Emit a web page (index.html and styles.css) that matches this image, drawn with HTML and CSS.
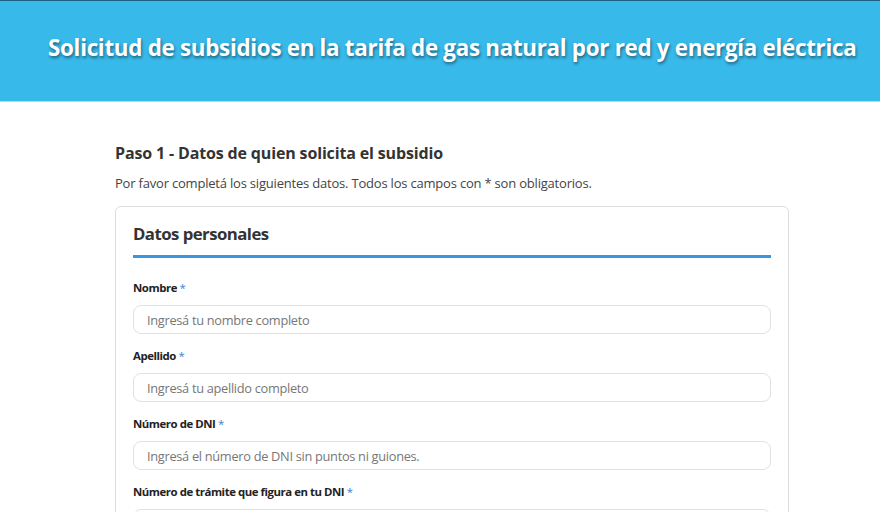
FILE: index.html
```html
<!DOCTYPE html>
<html lang="es">
<head>
<meta charset="utf-8">
<title>Solicitud de subsidios</title>
<link rel="stylesheet" href="styles.css">
</head>
<body>
<header class="banner">
  <h1 class="banner-title">Solicitud de subsidios en la tarifa de gas natural por red y energía eléctrica</h1>
</header>
<main class="page">
  <h2 class="step-title">Paso 1 - Datos de quien solicita el subsidio</h2>
  <p class="step-intro">Por favor completá los siguientes datos. Todos los campos con * son obligatorios.</p>
  <section class="card">
    <h3 class="card-title">Datos personales</h3>
    <div class="field">
      <label class="field-label" for="nombre">Nombre <span class="req">*</span></label>
      <input class="field-input" id="nombre" type="text" placeholder="Ingresá tu nombre completo">
    </div>
    <div class="field">
      <label class="field-label" for="apellido">Apellido <span class="req">*</span></label>
      <input class="field-input" id="apellido" type="text" placeholder="Ingresá tu apellido completo">
    </div>
    <div class="field">
      <label class="field-label" for="dni">Número de DNI <span class="req">*</span></label>
      <input class="field-input" id="dni" type="text" placeholder="Ingresá el número de DNI sin puntos ni guiones.">
    </div>
    <div class="field">
      <label class="field-label" for="tramite">Número de trámite que figura en tu DNI <span class="req">*</span></label>
      <input class="field-input" id="tramite" type="text" placeholder="">
    </div>
  </section>
</main>
</body>
</html>
```
FILE: styles.css
```css
* { box-sizing: border-box; }
body {
  margin: 0;
  font-family: "Open Sans", "Noto Sans", "Liberation Sans", sans-serif;
  color: #333;
  background: #fff;
}
.banner {
  height: 102px;
  background: #37b9ea;
  border-top: 1px solid #1d5f86;
  border-bottom: 1px solid #a9def3;
  display: flex;
  align-items: center;
  padding: 0 0 8px 48px;
  overflow: hidden;
}
.banner-title {
  margin: 0;
  font-size: 22.4px;
  letter-spacing: -0.3px;
  font-weight: 700;
  color: #fff;
  white-space: nowrap;
  text-shadow: 1px 2px 3px rgba(0, 0, 0, 0.45);
}
.page {
  margin-left: 115px;
  width: 674px;
}
.step-title {
  margin: 40px 0 0;
  font-size: 16px;
  letter-spacing: -0.15px;
  line-height: 22px;
  font-weight: 700;
  color: #333;
}
.step-intro {
  margin: 9px 0 0;
  font-size: 13px;
  letter-spacing: -0.2px;
  line-height: 20px;
  color: #444;
}
.card {
  margin-top: 13px;
  border: 1px solid #dcdcdc;
  border-radius: 6px;
  padding: 15px 17px 20px;
}
.card-title {
  margin: 0;
  font-size: 16.8px;
  letter-spacing: -0.55px;
  line-height: 24px;
  font-weight: 700;
  color: #333;
  padding-bottom: 9px;
  border-bottom: 3px solid #3a95e2;
  margin-bottom: 22px;
}
.field {
  display: flex;
  flex-direction: column;
  gap: 9px;
  margin-bottom: 14px;
}
.field-label {
  font-size: 11.4px;
  letter-spacing: -0.45px;
  line-height: 16px;
  font-weight: 700;
  color: #222;
}
.req {
  color: #3c7fd0;
  font-weight: 400;
}
.field-input {
  height: 29px;
  width: 100%;
  border: 1px solid #e1e1e1;
  border-radius: 8px;
  padding: 0 13px;
  font-family: inherit;
  font-size: 12.8px;
  letter-spacing: -0.3px;
  color: #333;
  background: #fff;
  outline: none;
}
.field-input::placeholder {
  color: #777;
  opacity: 1;
}
```
